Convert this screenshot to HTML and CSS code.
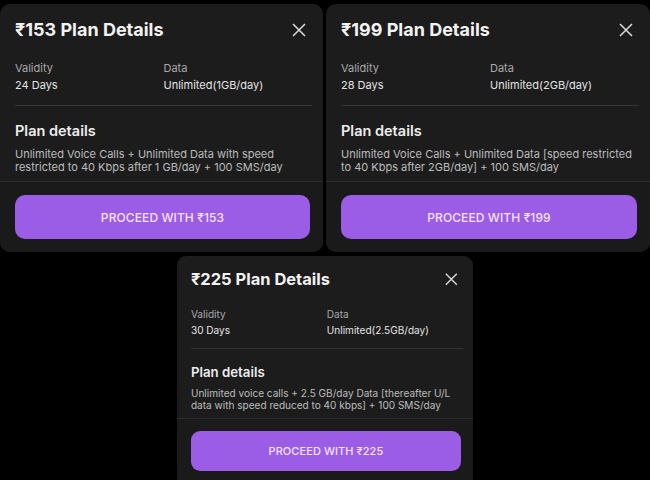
FILE: index.html
```html
<!DOCTYPE html>
<html lang="en">
<head>
<meta charset="utf-8">
<title>Plan Details</title>
<link rel="stylesheet" href="styles.css">
</head>
<body>
<div class="page">
  <div class="row">
    <section class="card card-left">
      <div class="card-body">
        <header class="head">
          <h2 class="title">₹153 Plan Details</h2>
          <svg class="close" viewBox="0 0 16 16" width="16" height="16"><path d="M2 2 L14 14 M14 2 L2 14" /></svg>
        </header>
        <div class="info">
          <div class="cell"><div class="label">Validity</div><div class="value">24 Days</div></div>
          <div class="cell"><div class="label">Data</div><div class="value">Unlimited(1GB/day)</div></div>
        </div>
        <h3 class="sub">Plan details</h3>
        <p class="desc">Unlimited Voice Calls + Unlimited Data with speed restricted to 40 Kbps after 1 GB/day + 100 SMS/day</p>
      </div>
      <footer class="foot"><button class="btn">PROCEED WITH ₹153</button></footer>
    </section>
    <section class="card card-right">
      <div class="card-body">
        <header class="head">
          <h2 class="title">₹199 Plan Details</h2>
          <svg class="close" viewBox="0 0 16 16" width="16" height="16"><path d="M2 2 L14 14 M14 2 L2 14" /></svg>
        </header>
        <div class="info">
          <div class="cell"><div class="label">Validity</div><div class="value">28 Days</div></div>
          <div class="cell"><div class="label">Data</div><div class="value">Unlimited(2GB/day)</div></div>
        </div>
        <h3 class="sub">Plan details</h3>
        <p class="desc">Unlimited Voice Calls + Unlimited Data [speed restricted to 40 Kbps after 2GB/day] + 100 SMS/day</p>
      </div>
      <footer class="foot"><button class="btn">PROCEED WITH ₹199</button></footer>
    </section>
  </div>
  <div class="row row-center">
    <section class="card card-small">
      <div class="card-body">
        <header class="head">
          <h2 class="title">₹225 Plan Details</h2>
          <svg class="close" viewBox="0 0 16 16" width="16" height="16"><path d="M2 2 L14 14 M14 2 L2 14" /></svg>
        </header>
        <div class="info">
          <div class="cell"><div class="label">Validity</div><div class="value">30 Days</div></div>
          <div class="cell"><div class="label">Data</div><div class="value">Unlimited(2.5GB/day)</div></div>
        </div>
        <h3 class="sub">Plan details</h3>
        <p class="desc">Unlimited voice calls + 2.5 GB/day Data [thereafter U/L data with speed reduced to 40 kbps] + 100 SMS/day</p>
      </div>
      <footer class="foot"><button class="btn">PROCEED WITH ₹225</button></footer>
    </section>
  </div>
</div>
</body>
</html>
```
FILE: styles.css
```css
html, body {
  margin: 0;
  padding: 0;
  background: #000;
  width: 650px;
  height: 480px;
  overflow: hidden;
}

body {
  font-family: Inter, "Noto Sans", "DejaVu Sans", sans-serif;
  color: #ececec;
}

.page {
  display: flex;
  flex-direction: column;
  gap: 4px;
  padding-top: 4px;
}

.row {
  display: flex;
  gap: 3px;
}

.row-center {
  justify-content: center;
}

.card {
  background: #1c1c1c;
  border-radius: 10px;
  overflow: hidden;
  display: flex;
  flex-direction: column;
}

.card-left { width: 323px; }
.card-right { width: 324px; }
.card-small {
  width: 323px;
  zoom: 0.915;
  height: 260px;
}

.card-body {
  padding: 14px 13px 0 15px;
  border-bottom: 1px solid #2c2c2c;
}

.head {
  display: flex;
  align-items: center;
  justify-content: space-between;
  margin-bottom: 18px;
}

.title {
  margin: 0;
  font-size: 18px;
  line-height: 24px;
  font-weight: 700;
  color: #f2f2f2;
}

.close {
  margin-right: 3px;
  stroke: #dcdcdc;
  stroke-width: 1.5;
  fill: none;
}

.info {
  display: grid;
  grid-template-columns: 1fr 1fr;
  padding-bottom: 12px;
  border-bottom: 1px solid #333;
  margin-right: -2px;
}

.label {
  font-size: 11px;
  line-height: 16px;
  color: #a9a9a9;
  margin-bottom: 1px;
}

.value {
  font-size: 11px;
  line-height: 16px;
  color: #e4e4e4;
}

.sub {
  margin: 15px 0 0;
  font-size: 14.5px;
  line-height: 20px;
  font-weight: 600;
  color: #ededed;
}

.desc {
  margin: 7px 0 7px;
  font-size: 11px;
  line-height: 13px;
  color: #bdbdbd;
}

.foot {
  padding: 13px 13px 13px 15px;
  background: #1a1a1a;
  flex: 1;
}

.btn {
  display: block;
  width: 100%;
  height: 44px;
  border: 0;
  border-radius: 10px;
  background: #9c5de6;
  color: #f6e2ff;
  font-family: inherit;
  font-size: 12px;
  font-weight: 500;
  letter-spacing: 0.1px;
}
```
